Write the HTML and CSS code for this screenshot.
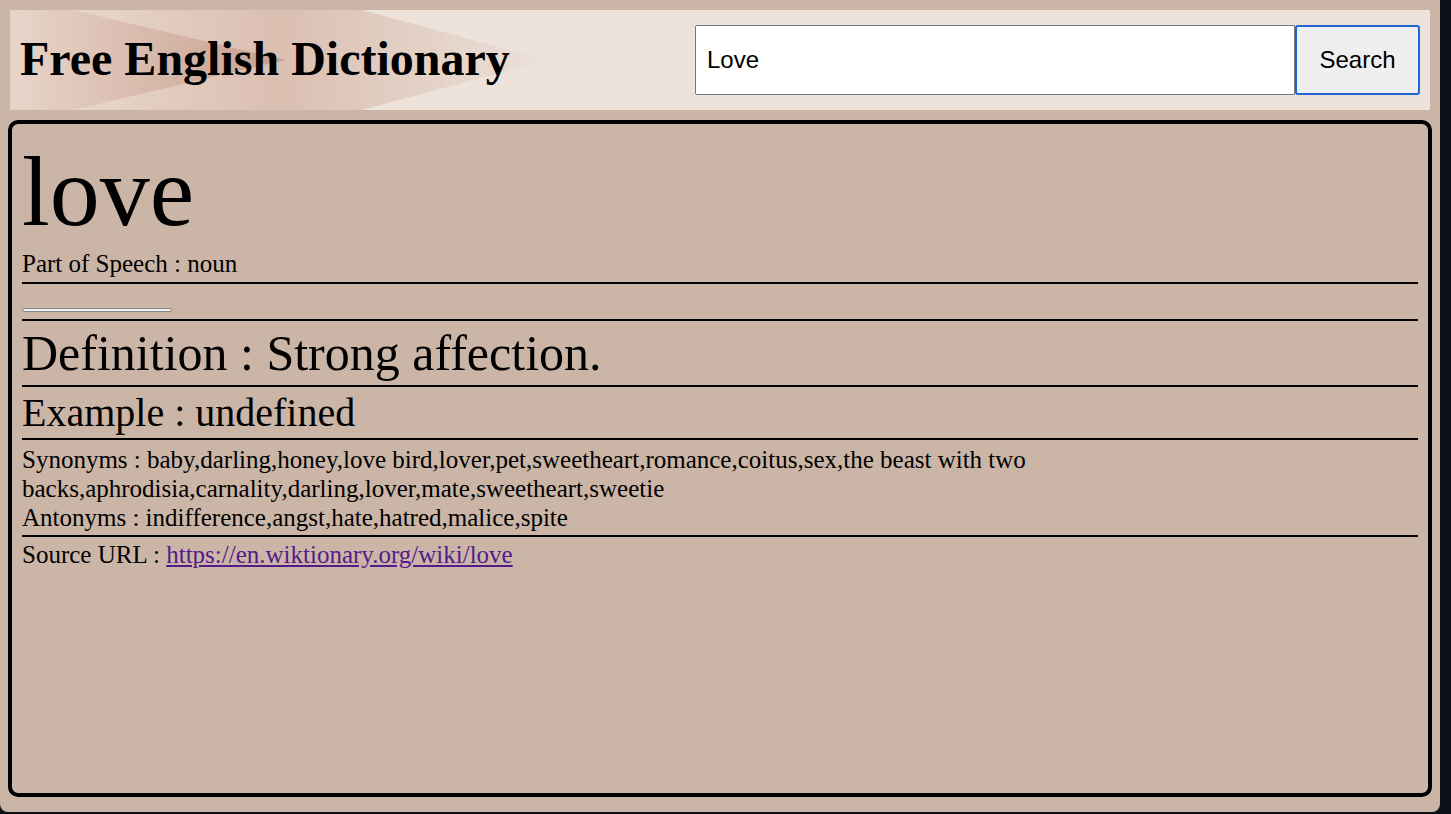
FILE: index.html
```html
<!DOCTYPE html>
<html lang="en">
<head>
<meta charset="utf-8">
<title>Free English Dictionary</title>
<link rel="stylesheet" href="styles.css">
</head>
<body>
  <header class="masthead">
    <svg class="masthead-bg" width="1420" height="100" viewBox="0 0 1420 100" aria-hidden="true">
      <defs>
        <linearGradient id="g2" gradientUnits="userSpaceOnUse" x1="0" y1="0" x2="537" y2="0">
          <stop offset="0" stop-color="#ebdfd6"/>
          <stop offset="0.12" stop-color="#e8d6cb"/>
          <stop offset="0.5" stop-color="#dbbfb1"/>
          <stop offset="1" stop-color="#ebe1d9"/>
        </linearGradient>
        <linearGradient id="g1" gradientUnits="userSpaceOnUse" x1="0" y1="0" x2="275" y2="0">
          <stop offset="0" stop-color="#e8d5ca"/>
          <stop offset="1" stop-color="#c89f8e"/>
        </linearGradient>
      </defs>
      <polygon points="0,-95 0,195 537,50" fill="url(#g2)"/>
      <polygon points="0,-15 0,115 275,50" fill="url(#g1)"/>
    </svg>
    <h1 class="title">Free English Dictionary</h1>
    <form class="search">
      <input class="search-input" type="text" value="Love">
      <button class="search-btn" type="button">Search</button>
    </form>
  </header>

  <main class="entry">
    <section class="sec sec-head">
      <div class="word">love</div>
      <div class="small">Part of Speech : noun</div>
    </section>
    <section class="sec sec-audio">
      <div class="audio-bar"></div>
    </section>
    <section class="sec sec-def">
      <div class="definition">Definition : Strong affection.</div>
    </section>
    <section class="sec sec-ex">
      <div class="example">Example : undefined</div>
    </section>
    <section class="sec sec-syn">
      <div class="small">Synonyms : baby,darling,honey,love bird,lover,pet,sweetheart,romance,coitus,sex,the beast with two backs,aphrodisia,carnality,darling,lover,mate,sweetheart,sweetie</div>
      <div class="small">Antonyms : indifference,angst,hate,hatred,malice,spite</div>
    </section>
    <section class="sec-src">
      <div class="small">Source URL : <a class="src-link" href="#">https://en.wiktionary.org/wiki/love</a></div>
    </section>
  </main>
</body>
</html>
```

FILE: styles.css
```css
html {
  background: #0d1117;
  margin: 0;
}

body {
  margin: 0;
  width: 1440px;
  height: 812px;
  box-sizing: border-box;
  padding: 10px 8px 15px 8px;
  background: #cbb5a6;
  border-radius: 0 0 8px 8px;
  display: flex;
  flex-direction: column;
  font-family: "Liberation Serif", "Times New Roman", serif;
  color: #000;
}

.masthead {
  position: relative;
  overflow: hidden;
  margin: 0 2px;
  height: 100px;
  background: #ede3da;
  display: flex;
  align-items: center;
  justify-content: space-between;
  padding: 0 10px;
  flex-shrink: 0;
}

.masthead-bg {
  position: absolute;
  left: 0;
  top: 0;
}

.title {
  position: relative;
  margin: 0 0 4px 0;
  font-size: 48px;
  font-weight: bold;
  line-height: 55px;
}

.search {
  position: relative;
  display: flex;
  margin: 0;
}

.search-input {
  width: 600px;
  height: 70px;
  box-sizing: border-box;
  border: 1px solid #767676;
  border-radius: 2px 0 0 2px;
  padding: 0 11px;
  font-family: "Liberation Sans", Arial, sans-serif;
  font-size: 24px;
  color: #000;
  background: #fff;
  outline: none;
}

.search-btn {
  width: 125px;
  height: 70px;
  box-sizing: border-box;
  border: 2px solid #1f66d1;
  border-radius: 3px;
  background: #efefef;
  font-family: "Liberation Sans", Arial, sans-serif;
  font-size: 24px;
  color: #000;
  padding: 0;
}

.entry {
  flex: 1;
  margin-top: 10px;
  border: 4px solid #000;
  border-radius: 10px;
  padding: 0 10px;
}

.sec {
  border-bottom: 2px solid #000;
}

.sec-head {
  padding: 10px 0 4px;
}

.word {
  font-size: 100px;
  line-height: 115px;
}

.small {
  font-size: 25px;
  line-height: 29px;
}

.sec-audio {
  padding: 24px 0 7px;
}

.audio-bar {
  width: 150px;
  height: 4px;
  box-sizing: border-box;
  border: 1px solid #858585;
  border-radius: 2px;
  background: #f2f2f2;
}

.sec-def {
  padding: 4px 0 3px;
}

.definition {
  font-size: 50px;
  line-height: 57px;
}

.example {
  font-size: 40px;
  line-height: 51px;
}

.sec-syn {
  padding: 5px 0 3px;
}

.sec-src {
  padding-top: 3px;
}

.src-link {
  color: #551a8b;
  text-decoration: underline;
}
```
